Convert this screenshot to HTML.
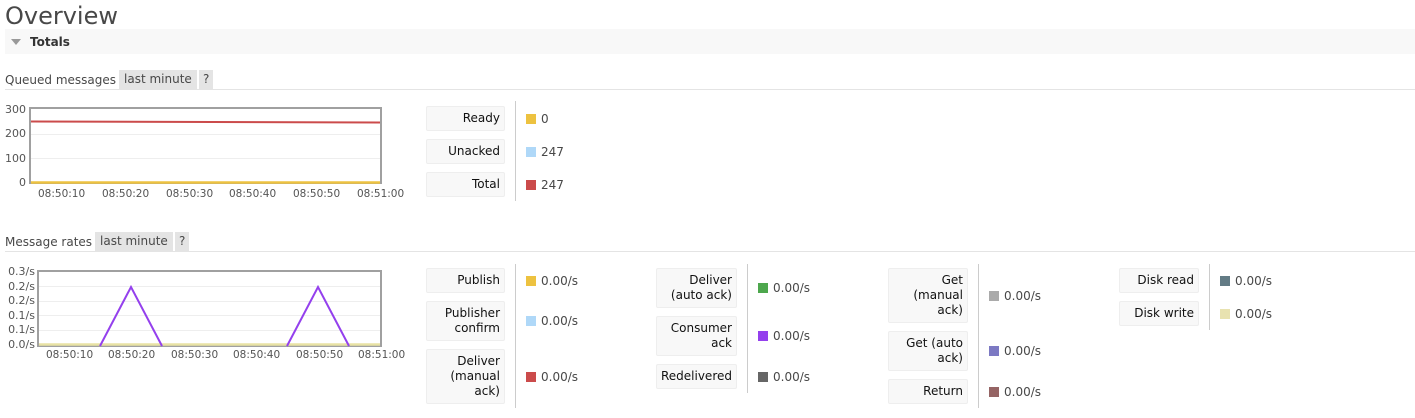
<!DOCTYPE html><html><head><style>
body{margin:0;width:1415px;height:418px;background:#fff;font-family:"DejaVu Sans","Liberation Sans",sans-serif;font-size:12px;color:#484848;position:relative;overflow:hidden}
.a{position:absolute;white-space:nowrap}
.lb{position:absolute;background:#f8f8f8;border:1px solid #eee;border-radius:2px;text-align:right;color:#111;font-size:12px;line-height:15px;box-sizing:border-box;padding:0 4px;display:flex;flex-direction:column;justify-content:center;align-items:flex-end}
.dv{position:absolute;width:1px;background:#ccc}
.sw{position:absolute;width:10px;height:10px}
.v{position:absolute;font-size:12px;line-height:14px;color:#484848}
.bd{position:absolute;background:#e4e4e4;height:19px;line-height:19px;padding:0 5px;font-size:12px;color:#484848}
.ax{position:absolute;font-size:10.5px;color:#545454;line-height:12px}
.ay{position:absolute;font-size:11px;color:#545454;line-height:12px;text-align:right;left:0}
</style></head><body>
<div class="a" style="left:5px;top:1px;font-size:24px;line-height:30px;color:#484848">Overview</div>
<div class="a" style="left:5px;top:29px;width:1410px;height:25px;background:#f8f8f8"></div>
<svg class="a" style="left:11px;top:39px" width="11" height="8"><path d="M0 0H10L5 6Z" fill="#999"/></svg>
<div class="a" style="left:30px;top:35px;font-weight:bold;color:#333;font-size:12px;line-height:15px">Totals</div>

<div class="a" style="left:5px;top:73px;line-height:15px">Queued messages</div>
<div class="bd" style="left:119px;top:70px">last minute</div>
<div class="bd" style="left:199px;top:70px;padding:0 4px">?</div>
<div class="a" style="left:5px;top:89px;width:1410px;height:1px;background:#e4e4e4"></div>

<svg class="a" style="left:0;top:100px" width="420" height="105">
<g stroke="#eee" stroke-width="1"><line x1="30" y1="34.5" x2="381" y2="34.5"/><line x1="30" y1="58.5" x2="381" y2="58.5"/></g>
<rect x="30" y="8" width="351" height="75" fill="none" stroke="#a0a0a0" stroke-width="2"/>
<line x1="31" y1="21.5" x2="380" y2="22.5" stroke="#cb4b4b" stroke-width="2"/>
<line x1="31" y1="82.5" x2="380" y2="82.5" stroke="#edc240" stroke-width="2.5"/>
</svg>
<div class="ay" style="width:26px;top:104px">300</div>
<div class="ay" style="width:26px;top:128px">200</div>
<div class="ay" style="width:26px;top:153px">100</div>
<div class="ay" style="width:26px;top:177px">0</div>
<div class="ax" style="left:38px;top:188px">08:50:10</div>
<div class="ax" style="left:102px;top:188px">08:50:20</div>
<div class="ax" style="left:166px;top:188px">08:50:30</div>
<div class="ax" style="left:229px;top:188px">08:50:40</div>
<div class="ax" style="left:293px;top:188px">08:50:50</div>
<div class="ax" style="left:357px;top:188px">08:51:00</div>

<div class="lb" style="left:426px;top:106px;width:79px;height:25px">Ready</div>
<div class="lb" style="left:426px;top:139px;width:79px;height:25px">Unacked</div>
<div class="lb" style="left:426px;top:172px;width:79px;height:25px">Total</div>
<div class="dv" style="left:515px;top:101px;height:100px"></div>
<div class="sw" style="left:526px;top:114px;background:#edc240"></div><div class="v" style="left:541px;top:112px">0</div>
<div class="sw" style="left:526px;top:147px;background:#afd8f8"></div><div class="v" style="left:541px;top:145px">247</div>
<div class="sw" style="left:526px;top:180px;background:#cb4b4b"></div><div class="v" style="left:541px;top:178px">247</div>

<div class="a" style="left:5px;top:235px;line-height:15px">Message rates</div>
<div class="bd" style="left:95px;top:232px">last minute</div>
<div class="bd" style="left:175px;top:232px;padding:0 4px">?</div>
<div class="a" style="left:5px;top:251px;width:1410px;height:1px;background:#e4e4e4"></div>

<svg class="a" style="left:0;top:260px" width="420" height="100">
<g stroke="#eee" stroke-width="1"><line x1="38" y1="26.5" x2="381" y2="26.5"/><line x1="38" y1="41.5" x2="381" y2="41.5"/><line x1="38" y1="55.5" x2="381" y2="55.5"/><line x1="38" y1="70.5" x2="381" y2="70.5"/></g>
<rect x="38" y="11" width="343" height="75" fill="none" stroke="#a0a0a0" stroke-width="2"/>
<line x1="39" y1="84.5" x2="380" y2="84.5" stroke="#e8e2a4" stroke-width="2.5"/>
<polyline points="100,86 131,27 162,86" fill="none" stroke="#9440ed" stroke-width="2"/>
<polyline points="287,86 318,27 349,86" fill="none" stroke="#9440ed" stroke-width="2"/>
</svg>
<div class="ay" style="width:35px;top:266px">0.3/s</div>
<div class="ay" style="width:35px;top:281px">0.2/s</div>
<div class="ay" style="width:35px;top:295px">0.2/s</div>
<div class="ay" style="width:35px;top:310px">0.1/s</div>
<div class="ay" style="width:35px;top:324px">0.1/s</div>
<div class="ay" style="width:35px;top:339px">0.0/s</div>
<div class="ax" style="left:46px;top:349px">08:50:10</div>
<div class="ax" style="left:108px;top:349px">08:50:20</div>
<div class="ax" style="left:171px;top:349px">08:50:30</div>
<div class="ax" style="left:233px;top:349px">08:50:40</div>
<div class="ax" style="left:296px;top:349px">08:50:50</div>
<div class="ax" style="left:358px;top:349px">08:51:00</div>

<div class="lb" style="left:426px;top:268px;width:79px;height:25px">Publish</div>
<div class="lb" style="left:426px;top:301px;width:79px;height:40px">Publisher<br>confirm</div>
<div class="lb" style="left:426px;top:349px;width:79px;height:55px">Deliver<br>(manual<br>ack)</div>
<div class="dv" style="left:515px;top:264px;height:144px"></div>
<div class="sw" style="left:526px;top:276px;background:#edc240"></div><div class="v" style="left:541px;top:274px">0.00/s</div>
<div class="sw" style="left:526px;top:316px;background:#afd8f8"></div><div class="v" style="left:541px;top:314px">0.00/s</div>
<div class="sw" style="left:526px;top:372px;background:#cb4b4b"></div><div class="v" style="left:541px;top:370px">0.00/s</div>

<div class="lb" style="left:656px;top:268px;width:81px;height:40px">Deliver<br>(auto ack)</div>
<div class="lb" style="left:656px;top:316px;width:81px;height:40px">Consumer<br>ack</div>
<div class="lb" style="left:656px;top:364px;width:81px;height:25px">Redelivered</div>
<div class="dv" style="left:747px;top:264px;height:129px"></div>
<div class="sw" style="left:758px;top:283px;background:#4da74d"></div><div class="v" style="left:773px;top:281px">0.00/s</div>
<div class="sw" style="left:758px;top:331px;background:#9440ed"></div><div class="v" style="left:773px;top:329px">0.00/s</div>
<div class="sw" style="left:758px;top:372px;background:#666"></div><div class="v" style="left:773px;top:370px">0.00/s</div>

<div class="lb" style="left:888px;top:268px;width:80px;height:55px">Get<br>(manual<br>ack)</div>
<div class="lb" style="left:888px;top:331px;width:80px;height:40px">Get (auto<br>ack)</div>
<div class="lb" style="left:888px;top:379px;width:80px;height:25px">Return</div>
<div class="dv" style="left:978px;top:264px;height:144px"></div>
<div class="sw" style="left:989px;top:291px;background:#aaa"></div><div class="v" style="left:1004px;top:289px">0.00/s</div>
<div class="sw" style="left:989px;top:346px;background:#7c79c3"></div><div class="v" style="left:1004px;top:344px">0.00/s</div>
<div class="sw" style="left:989px;top:387px;background:#956464"></div><div class="v" style="left:1004px;top:385px">0.00/s</div>

<div class="lb" style="left:1119px;top:268px;width:80px;height:25px">Disk read</div>
<div class="lb" style="left:1119px;top:301px;width:80px;height:25px">Disk write</div>
<div class="dv" style="left:1209px;top:264px;height:66px"></div>
<div class="sw" style="left:1220px;top:276px;background:#637b85"></div><div class="v" style="left:1235px;top:274px">0.00/s</div>
<div class="sw" style="left:1220px;top:309px;background:#e8e2b0"></div><div class="v" style="left:1235px;top:307px">0.00/s</div>
</body></html>
